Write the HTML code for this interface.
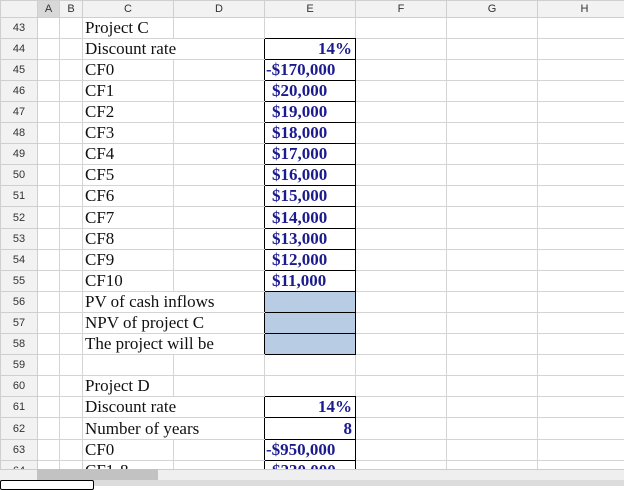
<!DOCTYPE html>
<html><head><meta charset="utf-8"><style>
body{margin:0;width:624px;height:486px;overflow:hidden;background:#fff;position:relative}
.wrap{position:absolute;left:0;top:0;width:624px;height:469px;overflow:hidden}
table{border-collapse:collapse;table-layout:fixed;width:631px}
td{border:1px solid #d4d4d4;padding:0;white-space:nowrap;overflow:visible;font:17px "Liberation Serif",serif;color:#111;line-height:18px}
tr.h{height:17px}
tr.h td{height:16px;line-height:14px;background:#f2f2f2;font:11px "Liberation Sans",sans-serif;color:#333;text-align:center;border-color:#cfcfcf}
td.n{background:#f2f2f2;font:11px "Liberation Sans",sans-serif;color:#333;text-align:center;border-color:#cfcfcf}
td.c{padding-left:2px}
td.sp{border-right-style:hidden}
td.v{border:1px solid #000;color:#1b1b8f;font-weight:bold;text-align:right;padding-right:3px}
td.m{text-align:left;padding-left:7px;padding-right:0}
td.mn{text-align:left;padding-left:1px;padding-right:0}
td.fill{border:1px solid #000;background:#b8cce4}
td:has(+ td.v), td:has(+ td.fill){border-right-color:#000}
td.vt{border-bottom-color:#000}
tr{height:21px}
tr.t{height:22px}
.sb{position:absolute;left:0;top:469px;width:624px;height:11px;background:#efefef;border-top:1px solid #ccc}
.th{position:absolute;left:37px;top:469px;width:121px;height:11px;background:#c2c2c2}
.tb{position:absolute;left:0;top:480px;width:624px;height:6px;background:#dcdcdc}
.tab{position:absolute;left:0;top:480px;width:92px;height:8px;background:#fff;border:1px solid #000;border-radius:2px}
</style></head><body>
<div class="wrap"><table>
<colgroup><col style="width:37px"><col style="width:22px"><col style="width:23px"><col style="width:91px"><col style="width:91px"><col style="width:91px"><col style="width:91px"><col style="width:91px"><col style="width:94px"></colgroup>
<tr class="h"><td></td><td style="background:#d8d8d8">A</td><td>B</td><td>C</td><td>D</td><td>E</td><td>F</td><td>G</td><td>H</td></tr>
<tr><td class="n">43</td><td></td><td></td><td class="c">Project C</td><td></td><td class="vt"></td><td></td><td></td><td></td></tr>
<tr><td class="n">44</td><td></td><td></td><td class="c sp">Discount rate</td><td></td><td class="v">14%</td><td></td><td></td><td></td></tr>
<tr><td class="n">45</td><td></td><td></td><td class="c">CF0</td><td></td><td class="v mn">-$170,000</td><td></td><td></td><td></td></tr>
<tr><td class="n">46</td><td></td><td></td><td class="c">CF1</td><td></td><td class="v m">$20,000</td><td></td><td></td><td></td></tr>
<tr><td class="n">47</td><td></td><td></td><td class="c">CF2</td><td></td><td class="v m">$19,000</td><td></td><td></td><td></td></tr>
<tr><td class="n">48</td><td></td><td></td><td class="c">CF3</td><td></td><td class="v m">$18,000</td><td></td><td></td><td></td></tr>
<tr><td class="n">49</td><td></td><td></td><td class="c">CF4</td><td></td><td class="v m">$17,000</td><td></td><td></td><td></td></tr>
<tr><td class="n">50</td><td></td><td></td><td class="c">CF5</td><td></td><td class="v m">$16,000</td><td></td><td></td><td></td></tr>
<tr><td class="n">51</td><td></td><td></td><td class="c">CF6</td><td></td><td class="v m">$15,000</td><td></td><td></td><td></td></tr>
<tr class="t"><td class="n">52</td><td></td><td></td><td class="c">CF7</td><td></td><td class="v m">$14,000</td><td></td><td></td><td></td></tr>
<tr><td class="n">53</td><td></td><td></td><td class="c">CF8</td><td></td><td class="v m">$13,000</td><td></td><td></td><td></td></tr>
<tr><td class="n">54</td><td></td><td></td><td class="c">CF9</td><td></td><td class="v m">$12,000</td><td></td><td></td><td></td></tr>
<tr><td class="n">55</td><td></td><td></td><td class="c">CF10</td><td></td><td class="v m">$11,000</td><td></td><td></td><td></td></tr>
<tr><td class="n">56</td><td></td><td></td><td class="c sp">PV of cash inflows</td><td></td><td class="fill"></td><td></td><td></td><td></td></tr>
<tr><td class="n">57</td><td></td><td></td><td class="c sp">NPV of project C</td><td></td><td class="fill"></td><td></td><td></td><td></td></tr>
<tr><td class="n">58</td><td></td><td></td><td class="c sp">The project will be</td><td></td><td class="fill"></td><td></td><td></td><td></td></tr>
<tr><td class="n">59</td><td></td><td></td><td class="c"></td><td></td><td></td><td></td><td></td><td></td></tr>
<tr><td class="n">60</td><td></td><td></td><td class="c">Project D</td><td></td><td class="vt"></td><td></td><td></td><td></td></tr>
<tr><td class="n">61</td><td></td><td></td><td class="c sp">Discount rate</td><td></td><td class="v">14%</td><td></td><td></td><td></td></tr>
<tr class="t"><td class="n">62</td><td></td><td></td><td class="c sp">Number of years</td><td></td><td class="v">8</td><td></td><td></td><td></td></tr>
<tr><td class="n">63</td><td></td><td></td><td class="c">CF0</td><td></td><td class="v mn">-$950,000</td><td></td><td></td><td></td></tr>
<tr><td class="n">64</td><td></td><td></td><td class="c">CF1-8</td><td></td><td class="v m">$230,000</td><td></td><td></td><td></td></tr>
</table></div>
<div class="sb"></div><div class="th"></div>
<div class="tb"></div><div class="tab"></div>
</body></html>
